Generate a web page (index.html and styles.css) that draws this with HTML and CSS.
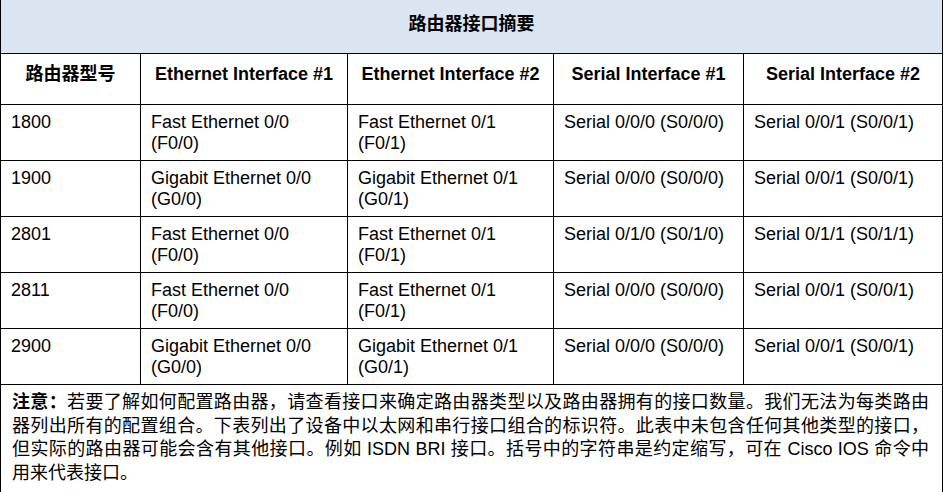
FILE: index.html
```html
<!DOCTYPE html>
<html lang="zh-CN">
<head>
<meta charset="utf-8">
<title>路由器接口摘要</title>
<link rel="stylesheet" href="styles.css">
</head>
<body>
<table class="summary">
  <colgroup>
    <col class="c-model">
    <col class="c-eth1">
    <col class="c-eth2">
    <col class="c-ser1">
    <col class="c-ser2">
  </colgroup>
  <thead>
    <tr><th colspan="5" class="title">路由器接口摘要</th></tr>
    <tr class="heads">
      <th>路由器型号</th>
      <th>Ethernet Interface #1</th>
      <th>Ethernet Interface #2</th>
      <th>Serial Interface #1</th>
      <th>Serial Interface #2</th>
    </tr>
  </thead>
  <tbody>
    <tr>
      <td>1800</td>
      <td>Fast Ethernet 0/0 (F0/0)</td>
      <td>Fast Ethernet 0/1 (F0/1)</td>
      <td>Serial 0/0/0 (S0/0/0)</td>
      <td>Serial 0/0/1 (S0/0/1)</td>
    </tr>
    <tr>
      <td>1900</td>
      <td>Gigabit Ethernet 0/0 (G0/0)</td>
      <td>Gigabit Ethernet 0/1 (G0/1)</td>
      <td>Serial 0/0/0 (S0/0/0)</td>
      <td>Serial 0/0/1 (S0/0/1)</td>
    </tr>
    <tr>
      <td>2801</td>
      <td>Fast Ethernet 0/0 (F0/0)</td>
      <td>Fast Ethernet 0/1 (F0/1)</td>
      <td>Serial 0/1/0 (S0/1/0)</td>
      <td>Serial 0/1/1 (S0/1/1)</td>
    </tr>
    <tr>
      <td>2811</td>
      <td>Fast Ethernet 0/0 (F0/0)</td>
      <td>Fast Ethernet 0/1 (F0/1)</td>
      <td>Serial 0/0/0 (S0/0/0)</td>
      <td>Serial 0/0/1 (S0/0/1)</td>
    </tr>
    <tr>
      <td>2900</td>
      <td>Gigabit Ethernet 0/0 (G0/0)</td>
      <td>Gigabit Ethernet 0/1 (G0/1)</td>
      <td>Serial 0/0/0 (S0/0/0)</td>
      <td>Serial 0/0/1 (S0/0/1)</td>
    </tr>
  </tbody>
  <tfoot>
    <tr>
      <td colspan="5" class="note">
        <span class="ln"><strong>注意：</strong>若要了解如何配置路由器，请查看接口来确定路由器类型以及路由器拥有的接口数量。我们无法为每类路由</span>
        <span class="ln">器列出所有的配置组合。下表列出了设备中以太网和串行接口组合的标识符。此表中未包含任何其他类型的接口，</span>
        <span class="ln">但实际的路由器可能会含有其他接口。例如 ISDN BRI 接口。括号中的字符串是约定缩写，可在 Cisco IOS 命令中</span>
        <span class="ln ln-last">用来代表接口。</span>
      </td>
    </tr>
  </tfoot>
</table>
</body>
</html>
```
FILE: styles.css
```css
html, body {
  margin: 0;
  padding: 0;
  background: #ffffff;
}

body {
  font-family: "Liberation Sans", "Noto Sans CJK SC", Arial, sans-serif;
  font-size: 18px;
  color: #000000;
}

.summary {
  border-collapse: collapse;
  table-layout: fixed;
  width: 942px;
}

.c-model { width: 140px; }
.c-eth1  { width: 207px; }
.c-eth2  { width: 206px; }
.c-ser1  { width: 190px; }
.c-ser2  { width: 199px; }

.summary th,
.summary td {
  border: 1px solid #000000;
  vertical-align: top;
  line-height: 21px;
}

.summary th.title {
  border-top: none;
  background: #dbe5f1;
  text-align: center;
  font-weight: bold;
  padding: 14px 0 18px;
}

.heads th {
  text-align: center;
  font-weight: bold;
  padding: 10px 4px 19px;
}

.summary td {
  text-align: left;
  padding: 7px 5px 6px 10px;
}

.summary td.note {
  padding: 6px 13px 14px 11px;
  line-height: 23.5px;
}

.note strong {
  font-weight: bold;
}

.ln {
  display: block;
  text-align: justify;
  text-align-last: justify;
}

.ln-last {
  text-align-last: auto;
}
```
